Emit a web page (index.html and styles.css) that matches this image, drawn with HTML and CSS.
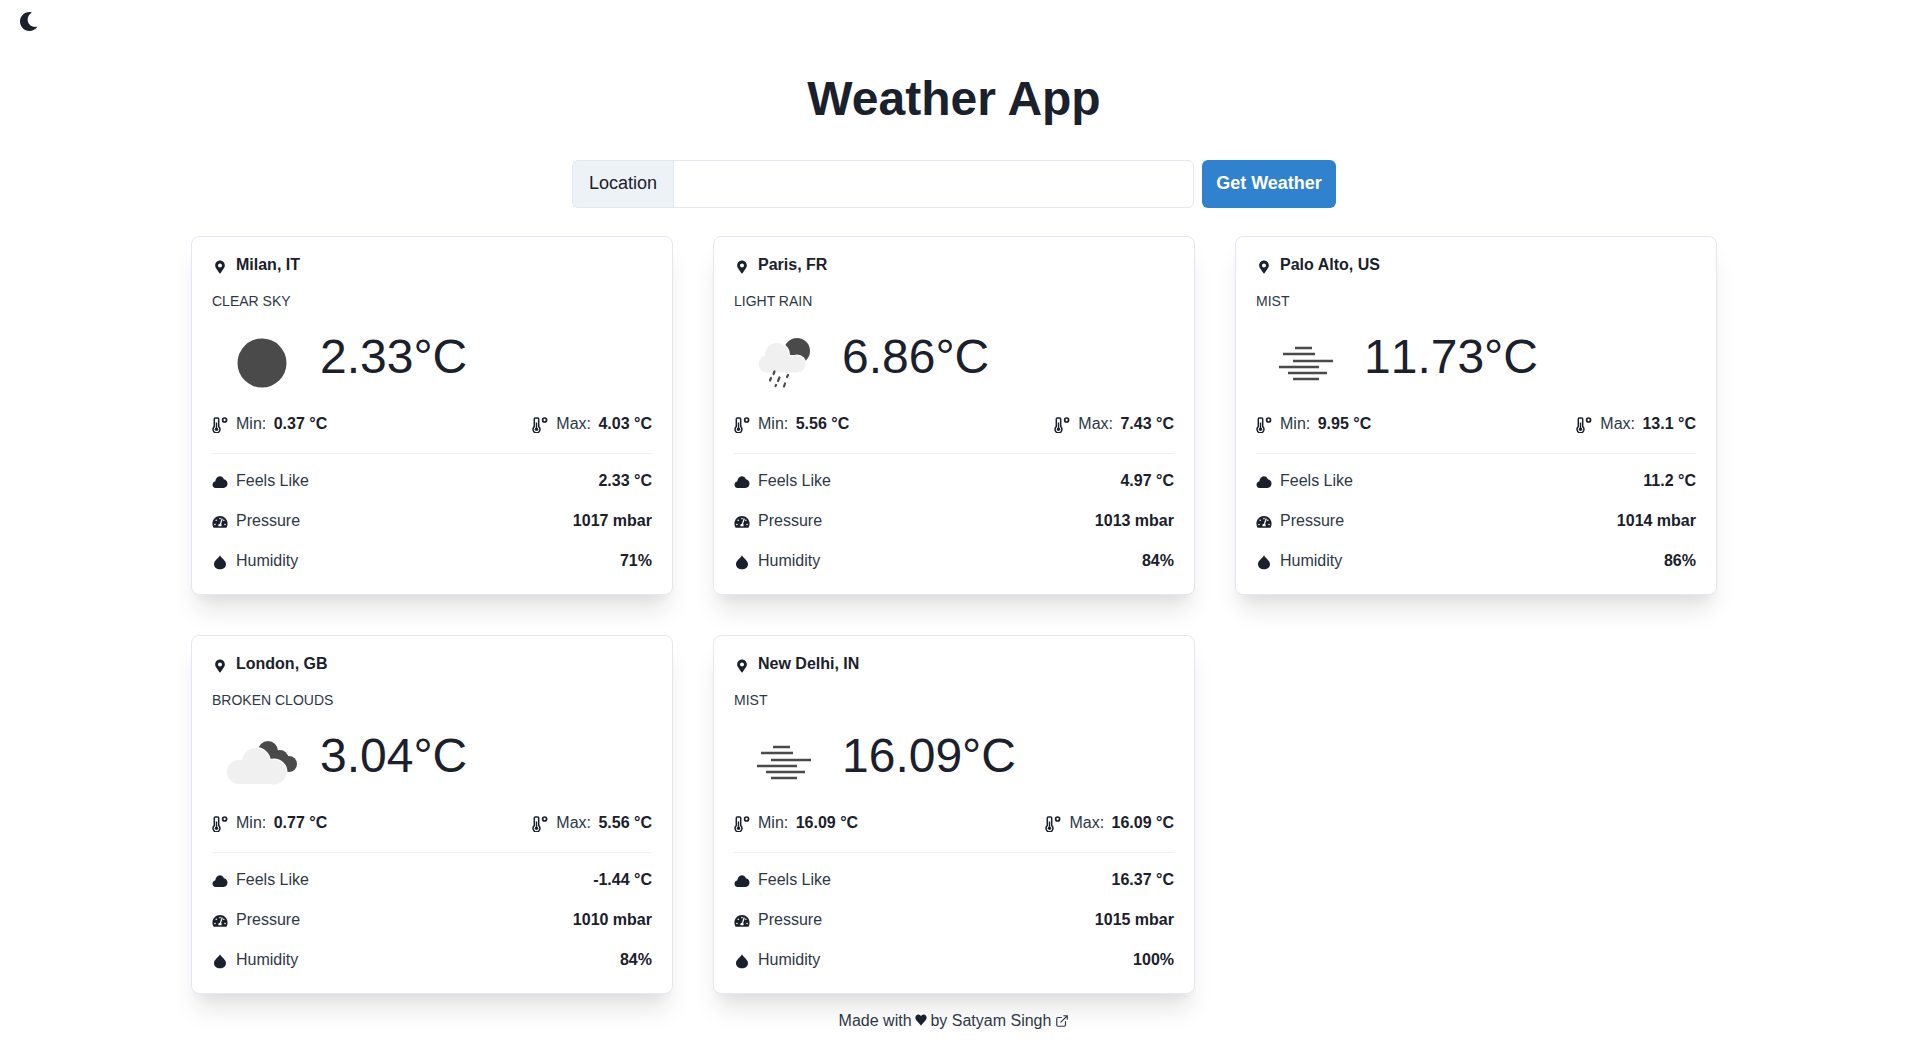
FILE: index.html
```html
<!DOCTYPE html>
<html lang="en">
<head>
    <meta charset="UTF-8">
    <meta name="viewport" content="width=device-width, initial-scale=1.0">
    <title>Weather App</title>
    <link rel="stylesheet" href="styles.css">
</head>
<body>
    <!-- Icon sprites -->
    <svg class="sprites" aria-hidden="true">
        <symbol id="i-moon" viewBox="0 0 512 512"><path d="M283.211 512c78.962 0 151.079-35.925 198.857-94.792 7.068-8.708-.639-21.43-11.562-19.35-124.203 23.654-238.262-71.576-238.262-196.954 0-72.222 38.662-138.635 101.498-174.394 9.686-5.512 7.25-20.197-3.756-22.23A258.156 258.156 0 0 0 283.211 0c-141.309 0-256 114.511-256 256 0 141.309 114.511 256 256 256z"/></symbol>
        <symbol id="i-pin" viewBox="-128 -64 640 640"><path d="M172.268 501.67C26.97 291.031 0 269.413 0 192 0 85.961 85.961 0 192 0s192 85.961 192 192c0 77.413-26.97 99.031-172.268 309.67-9.535 13.774-29.93 13.773-39.464 0zM192 272c44.183 0 80-35.817 80-80s-35.817-80-80-80-80 35.817-80 80 35.817 80 80 80z"/></symbol>
        <symbol id="i-thermo" viewBox="0 0 16 16">
            <path d="M3.300 1h2.400a1 1 0 0 1 1 1v7.600a3.500 3.500 0 1 1-4.400 0V2a1 1 0 0 1 1-1z" fill="none" stroke="currentColor" stroke-width="1.500"/>
            <circle cx="4.500" cy="12.200" r="1.700"/><rect x="3.800" y="5.500" width="1.400" height="6"/>
            <circle cx="12.600" cy="3" r="2" fill="none" stroke="currentColor" stroke-width="1.700"/>
        </symbol>
        <symbol id="i-cloud" viewBox="0 0 16 16"><path d="M3.600 14C1.700 14 .5 12.600.5 10.800.5 9 1.700 7.700 3.200 7.500 3.600 4.400 5.400 2.200 7.800 2.200c2 0 3.400 1.200 4.100 3 2.100.3 3.600 2 3.600 4.400 0 2.600-1.700 4.400-4 4.400z"/></symbol>
        <symbol id="i-gauge" viewBox="-16 -46 608 608"><path d="M288 32C128.94 32 0 160.94 0 320c0 52.8 14.25 102.26 39.06 144.8 5.61 9.62 16.3 15.2 27.44 15.2h443c11.14 0 21.83-5.58 27.44-15.2C561.75 422.26 576 372.8 576 320c0-159.06-128.94-288-288-288zm0 64c14.71 0 26.58 10.13 30.32 23.65-1.11 2.26-2.64 4.23-3.45 6.67l-9.22 27.67c-5.13 3.49-10.97 6.01-17.64 6.01-17.67 0-32-14.33-32-32S270.33 96 288 96zM96 384c-17.67 0-32-14.33-32-32s14.33-32 32-32 32 14.33 32 32-14.33 32-32 32zm48-160c-17.67 0-32-14.33-32-32s14.33-32 32-32 32 14.33 32 32-14.33 32-32 32zm246.77-72.41l-61.33 184C343.13 347.33 352 364.54 352 384c0 11.72-3.38 22.55-8.88 32H232.88c-5.5-9.45-8.88-20.28-8.88-32 0-33.94 26.5-61.43 59.9-63.59l61.34-184.01c4.17-12.56 17.73-19.45 30.36-15.17 12.57 4.19 19.35 17.79 15.17 30.36zm14.66 57.2l15.52-46.55c3.47-1.29 7.13-2.23 11.05-2.23 17.67 0 32 14.33 32 32s-14.33 32-32 32c-11.38-.01-20.89-6.28-26.57-15.22zM480 384c-17.67 0-32-14.33-32-32s14.33-32 32-32 32 14.33 32 32-14.33 32-32 32z"/></symbol>
        <symbol id="i-drop" viewBox="0 0 16 16"><path d="M8 1.200C9 4 14 6.200 14 10.200 14 13.300 11.300 15.200 8 15.200S2 13.300 2 10.200C2 6.200 7 4 8 1.200z"/></symbol>
        <symbol id="i-heart" viewBox="0 0 16 16"><path d="M8 15.500C6 12.500.5 9 .5 4.800.5 2.300 2.300.5 4.500.5 6 .5 7.300 1.500 8 3 8.700 1.500 10 .5 11.500.5 13.700.5 15.500 2.300 15.500 4.800 15.500 9 10 12.500 8 15.500z"/></symbol>

        <!-- Weather pictures, all on a 100x70 box -->
        <symbol id="w-clear" viewBox="0 0 100 70"><circle class="dark" cx="50" cy="35" r="24.500"/></symbol>
        <symbol id="w-rain" viewBox="0 0 100 70">
            <circle class="dark" cx="63" cy="23" r="13"/>
            <g class="halo"><circle cx="43" cy="27" r="12"/><circle cx="33" cy="36" r="8.500"/><circle cx="63" cy="36" r="8.500"/><rect x="33" y="28" width="30" height="16.500"/></g>
            <g class="light"><circle cx="43" cy="27" r="12"/><circle cx="33" cy="36" r="8.500"/><circle cx="63" cy="36" r="8.500"/><rect x="33" y="28" width="30" height="16.500"/></g>
            <g class="drops"><path d="M40.500 43.500l-1 2.500M37 50l-1 2.500M45.500 49.500l-1.500 3.500M54 47l-1 2M42 57l-.5 1M51 55.500l-1 3"/></g>
        </symbol>
        <symbol id="w-clouds" viewBox="0 0 100 70">
            <g class="dark"><circle cx="56" cy="24" r="10"/><circle cx="68" cy="31" r="8"/><circle cx="77" cy="37" r="8"/><rect x="54" y="28" width="22" height="12"/></g>
            <g class="halo"><circle cx="44" cy="35" r="14"/><circle cx="27" cy="45" r="12"/><circle cx="62" cy="45" r="12.500"/><rect x="27" y="40" width="36" height="17"/></g>
            <g class="light"><circle cx="44" cy="35" r="14"/><circle cx="27" cy="45" r="12"/><circle cx="62" cy="45" r="12.500"/><rect x="27" y="40" width="36" height="17"/></g>
        </symbol>
        <symbol id="w-mist" viewBox="0 0 100 70">
            <path class="fog" d="M39 20h17M27 26h32M37 33h40M23 39h40M32 45h39M37 51h26"/>
        </symbol>
    </svg>

    <button class="theme-btn" aria-label="Toggle theme"><svg class="icon-moon"><use href="#i-moon"/></svg></button>

    <main class="page">
        <h1 class="title">Weather App</h1>

        <form class="search">
            <div class="input-group">
                <label class="addon" for="location">Location</label>
                <input class="location-input" id="location" type="text">
            </div>
            <button class="search-btn" type="button">Get Weather</button>
        </form>

        <section class="cards">
            <article class="card">
                <h2 class="city"><svg class="icon"><use href="#i-pin"/></svg>Milan, IT</h2>
                <p class="desc">CLEAR SKY</p>
                <div class="now"><svg class="pic"><use href="#w-clear"/></svg><span class="temp">2.33°C</span></div>
                <div class="minmax">
                    <span class="mm"><svg class="icon"><use href="#i-thermo"/></svg>Min: <b>0.37 °C</b></span>
                    <span class="mm"><svg class="icon"><use href="#i-thermo"/></svg>Max: <b>4.03 °C</b></span>
                </div>
                <ul class="stats">
                    <li><span class="label"><svg class="icon"><use href="#i-cloud"/></svg>Feels Like</span><b>2.33 °C</b></li>
                    <li><span class="label"><svg class="icon"><use href="#i-gauge"/></svg>Pressure</span><b>1017 mbar</b></li>
                    <li><span class="label"><svg class="icon"><use href="#i-drop"/></svg>Humidity</span><b>71%</b></li>
                </ul>
            </article>

            <article class="card">
                <h2 class="city"><svg class="icon"><use href="#i-pin"/></svg>Paris, FR</h2>
                <p class="desc">LIGHT RAIN</p>
                <div class="now"><svg class="pic"><use href="#w-rain"/></svg><span class="temp">6.86°C</span></div>
                <div class="minmax">
                    <span class="mm"><svg class="icon"><use href="#i-thermo"/></svg>Min: <b>5.56 °C</b></span>
                    <span class="mm"><svg class="icon"><use href="#i-thermo"/></svg>Max: <b>7.43 °C</b></span>
                </div>
                <ul class="stats">
                    <li><span class="label"><svg class="icon"><use href="#i-cloud"/></svg>Feels Like</span><b>4.97 °C</b></li>
                    <li><span class="label"><svg class="icon"><use href="#i-gauge"/></svg>Pressure</span><b>1013 mbar</b></li>
                    <li><span class="label"><svg class="icon"><use href="#i-drop"/></svg>Humidity</span><b>84%</b></li>
                </ul>
            </article>

            <article class="card">
                <h2 class="city"><svg class="icon"><use href="#i-pin"/></svg>Palo Alto, US</h2>
                <p class="desc">MIST</p>
                <div class="now"><svg class="pic"><use href="#w-mist"/></svg><span class="temp">11.73°C</span></div>
                <div class="minmax">
                    <span class="mm"><svg class="icon"><use href="#i-thermo"/></svg>Min: <b>9.95 °C</b></span>
                    <span class="mm"><svg class="icon"><use href="#i-thermo"/></svg>Max: <b>13.1 °C</b></span>
                </div>
                <ul class="stats">
                    <li><span class="label"><svg class="icon"><use href="#i-cloud"/></svg>Feels Like</span><b>11.2 °C</b></li>
                    <li><span class="label"><svg class="icon"><use href="#i-gauge"/></svg>Pressure</span><b>1014 mbar</b></li>
                    <li><span class="label"><svg class="icon"><use href="#i-drop"/></svg>Humidity</span><b>86%</b></li>
                </ul>
            </article>

            <article class="card">
                <h2 class="city"><svg class="icon"><use href="#i-pin"/></svg>London, GB</h2>
                <p class="desc">BROKEN CLOUDS</p>
                <div class="now"><svg class="pic"><use href="#w-clouds"/></svg><span class="temp">3.04°C</span></div>
                <div class="minmax">
                    <span class="mm"><svg class="icon"><use href="#i-thermo"/></svg>Min: <b>0.77 °C</b></span>
                    <span class="mm"><svg class="icon"><use href="#i-thermo"/></svg>Max: <b>5.56 °C</b></span>
                </div>
                <ul class="stats">
                    <li><span class="label"><svg class="icon"><use href="#i-cloud"/></svg>Feels Like</span><b>-1.44 °C</b></li>
                    <li><span class="label"><svg class="icon"><use href="#i-gauge"/></svg>Pressure</span><b>1010 mbar</b></li>
                    <li><span class="label"><svg class="icon"><use href="#i-drop"/></svg>Humidity</span><b>84%</b></li>
                </ul>
            </article>

            <article class="card">
                <h2 class="city"><svg class="icon"><use href="#i-pin"/></svg>New Delhi, IN</h2>
                <p class="desc">MIST</p>
                <div class="now"><svg class="pic"><use href="#w-mist"/></svg><span class="temp">16.09°C</span></div>
                <div class="minmax">
                    <span class="mm"><svg class="icon"><use href="#i-thermo"/></svg>Min: <b>16.09 °C</b></span>
                    <span class="mm"><svg class="icon"><use href="#i-thermo"/></svg>Max: <b>16.09 °C</b></span>
                </div>
                <ul class="stats">
                    <li><span class="label"><svg class="icon"><use href="#i-cloud"/></svg>Feels Like</span><b>16.37 °C</b></li>
                    <li><span class="label"><svg class="icon"><use href="#i-gauge"/></svg>Pressure</span><b>1015 mbar</b></li>
                    <li><span class="label"><svg class="icon"><use href="#i-drop"/></svg>Humidity</span><b>100%</b></li>
                </ul>
            </article>
        </section>
    </main>

    <footer class="footer">
        Made with <svg class="icon-heart"><use href="#i-heart"/></svg> by <a class="author" href="#">Satyam Singh<svg class="icon-link" viewBox="0 0 24 24"><path d="M18 13v6a2 2 0 0 1-2 2H5a2 2 0 0 1-2-2V8a2 2 0 0 1 2-2h6M15 3h6v6M10 14L21 3"/></svg></a>
    </footer>
</body>
</html>
```

FILE: styles.css
```css
/* General Styles */
* {
    box-sizing: border-box;
}

body {
    margin: 0;
    font-family: "Liberation Sans", Arial, sans-serif;
    font-size: 16px;
    line-height: 24px;
    background-color: #fff;
    color: #1a202c;
}

.sprites {
    display: none;
}

.theme-btn {
    display: block;
    width: 48px;
    height: 40px;
    padding: 10px 0 0 19px;
    border: none;
    background: none;
    color: #1a202c;
    cursor: pointer;
}

.icon-moon {
    display: block;
    width: 19px;
    height: 19px;
    margin-top: -7px;
    fill: currentColor;
}

.page {
    width: 1526px;
    margin: 0 auto;
}

.title {
    margin: 30px 0 0;
    font-size: 48px;
    line-height: 58px;
    font-weight: 700;
    text-align: center;
}

/* Search */
.search {
    display: flex;
    justify-content: center;
    gap: 8px;
    margin-top: 32px;
}

.input-group {
    display: flex;
    width: 622px;
    height: 48px;
}

.addon {
    display: flex;
    align-items: center;
    padding: 0 16px 2px;
    font-size: 18px;
    background-color: #edf2f7;
    border: 1px solid #e2e8f0;
    border-right: none;
    border-radius: 6px 0 0 6px;
}

.location-input {
    flex: 1;
    min-width: 0;
    padding: 0 16px;
    font-size: 18px;
    border: 1px solid #e2e8f0;
    border-radius: 0 6px 6px 0;
    outline: none;
}

.search-btn {
    width: 134px;
    height: 48px;
    padding: 0 0 2px;
    font-family: inherit;
    font-size: 18px;
    font-weight: 700;
    color: #fff;
    background-color: #3182ce;
    border: none;
    border-radius: 6px;
    cursor: pointer;
}

/* Cards */
.cards {
    display: grid;
    grid-template-columns: repeat(3, 1fr);
    gap: 40px;
    margin-top: 28px;
}

.card {
    height: 359px;
    padding: 16px 20px 0;
    background: #fff;
    border: 1px solid #e2e8f0;
    border-radius: 8px;
    box-shadow: 0 20px 25px -5px rgba(0, 0, 0, 0.1), 0 10px 10px -5px rgba(0, 0, 0, 0.04);
}

.icon {
    flex: none;
    width: 16px;
    height: 16px;
    margin-right: 8px;
    fill: currentColor;
}

.city {
    display: flex;
    align-items: center;
    margin: 0;
    font-size: 16px;
    line-height: 24px;
    font-weight: 700;
}

.city .icon {
    margin-top: 3px;
}

.desc {
    margin: 12px 0 0;
    font-size: 14px;
    line-height: 24px;
    color: #2d3748;
}

.now {
    display: flex;
    margin-top: 15px;
    height: 70px;
}

.pic {
    width: 100px;
    height: 70px;
    margin-right: 8px;
}

.temp {
    font-size: 48px;
    line-height: 58px;
    font-kerning: none;
}

.dark {
    fill: #4a4a4a;
}

.light {
    fill: #f0f0f0;
}

.halo {
    fill: #fff;
    stroke: #fff;
    stroke-width: 2;
}

.drops {
    fill: none;
    stroke: #4a4a4a;
    stroke-width: 2.200;
    stroke-linecap: round;
}

.fog {
    fill: none;
    stroke: #4a4a4a;
    stroke-width: 2.400;
}

.minmax {
    display: flex;
    justify-content: space-between;
    margin-top: 14px;
    padding-bottom: 17px;
    border-bottom: 1px solid #edf2f7;
}

.mm {
    display: flex;
    align-items: center;
    white-space: pre;
    color: #2d3748;
}

.mm .icon {
    margin-top: 2px;
    color: #1a202c;
}

.mm b {
    margin-left: 3px;
    color: #1a202c;
}

.stats {
    margin: 15px 0 0;
    padding: 0;
    list-style: none;
}

.stats li {
    display: flex;
    justify-content: space-between;
    height: 24px;
    margin-bottom: 16px;
}

.label {
    display: flex;
    align-items: center;
    color: #2d3748;
}

.label .icon {
    margin-top: 2px;
    color: #1a202c;
}

/* Footer */
.footer {
    margin-top: 15px;
    text-align: center;
    color: #2d3748;
}

.icon-heart {
    width: 12px;
    height: 12px;
    margin: 0 -1px;
    fill: #1a202c;
}

.author {
    color: inherit;
    text-decoration: none;
}

.icon-link {
    width: 14px;
    height: 14px;
    margin-left: 4px;
    vertical-align: -2px;
    fill: none;
    stroke: currentColor;
    stroke-width: 2;
    stroke-linecap: round;
    stroke-linejoin: round;
}
```
